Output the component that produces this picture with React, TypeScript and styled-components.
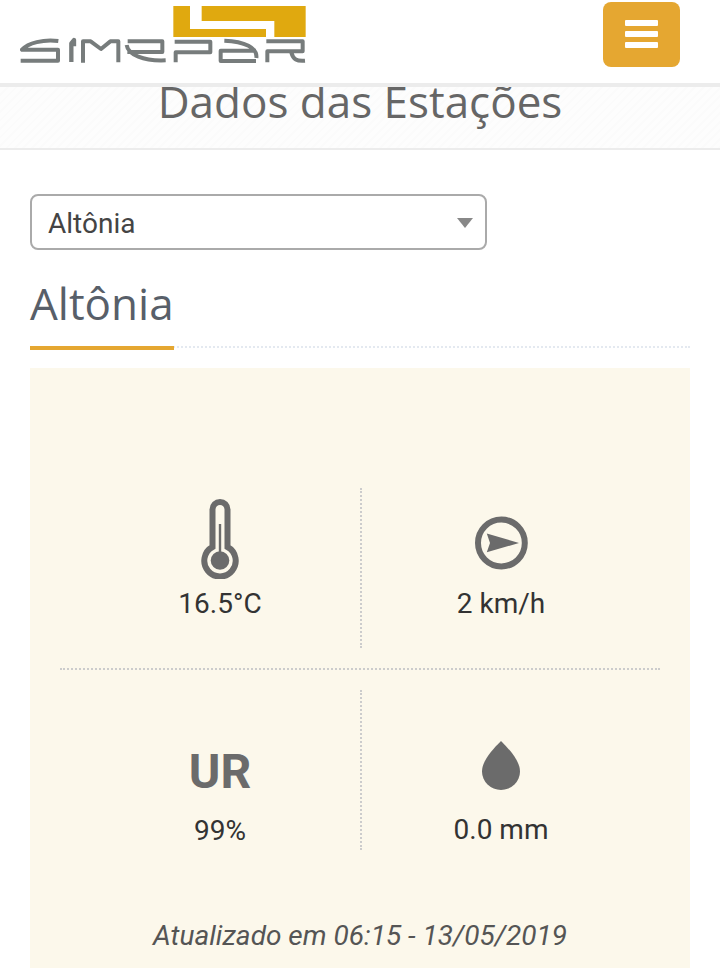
import React, { useState } from "react";
import styled, { createGlobalStyle } from "styled-components";

const GlobalStyle = createGlobalStyle`
  *, *::before, *::after { box-sizing: border-box; }
  body {
    margin: 0;
    background: #fff;
    color: #333;
    font-family: Roboto, "Liberation Sans", sans-serif;
    font-size: 28px;
    line-height: 38px;
  }
`;

const Header = styled.header`
  position: sticky;
  top: 0;
  z-index: 1;
  display: flex;
  justify-content: space-between;
  align-items: flex-start;
  padding: 2px 40px 16px 20px;
  background: #fff;
  border-bottom: 4px solid #ececec;
`;

const LogoLink = styled.a`
  display: block;
  padding-top: 4px;
  svg { display: block; }
`;

const MenuButton = styled.button`
  display: flex;
  flex-direction: column;
  align-items: center;
  justify-content: center;
  gap: 5px;
  width: 77px;
  height: 65px;
  padding: 0 0 1px;
  border: 0;
  border-radius: 8px;
  background: #e5a731;
  cursor: pointer;
`;

const MenuBar = styled.span`
  width: 33px;
  height: 6px;
  border-radius: 1px;
  background: #fff;
`;

const TitleBand = styled.div`
  margin-top: -16px;
  padding-bottom: 17px;
  border-bottom: 2px solid #ececec;
  background: repeating-linear-gradient(135deg, #fdfdfd 0 4px, #fbfbfb 4px 6px);
`;

const PageTitle = styled.h1`
  margin: 0;
  text-align: center;
  font: 400 44px/60px "Open Sans", "Noto Sans", sans-serif;
  color: #666;
`;

const Content = styled.main`
  padding: 44px 30px 6px;
`;

const SelectBox = styled.div`
  position: relative;
  width: 457px;
  max-width: 100%;
  svg {
    position: absolute;
    right: 14px;
    top: 24px;
    pointer-events: none;
  }
`;

const StationSelect = styled.select`
  appearance: none;
  display: block;
  width: 100%;
  height: 56px;
  padding: 4px 48px 0 16px;
  border: 2px solid #aaa;
  border-radius: 8px;
  background: #fff;
  color: #444;
  font: inherit;
`;

const StationHeading = styled.div`
  display: flex;
  margin: 23px 0 20px;
  border-bottom: 2px dotted #e4e9f0;
`;

const StationName = styled.h2`
  margin: 0 0 -4px;
  padding-bottom: 13px;
  border-bottom: 4px solid #e5a731;
  font: 400 44px/60px "Open Sans", "Noto Sans", sans-serif;
  color: #585f69;
`;

const Panel = styled.section`
  padding: 120px 30px 13px;
  background: #fcf8eb;
`;

const ReadingRow = styled.div<{ $divided?: boolean }>`
  display: grid;
  grid-template-columns: 141fr 139fr;
  padding: 0 20px ${(p) => (p.$divided ? "20px" : "0")};
  margin-bottom: ${(p) => (p.$divided ? "20px" : "0")};
  border-bottom: ${(p) => (p.$divided ? "2px dotted #ccc" : "0")};
`;

const Reading = styled.div<{ $bottom: number; $gap: number; $divided?: boolean }>`
  display: flex;
  flex-direction: column;
  align-items: center;
  justify-content: flex-end;
  gap: ${(p) => p.$gap}px;
  height: 160px;
  padding-bottom: ${(p) => p.$bottom}px;
  border-right: ${(p) => (p.$divided ? "2px dotted #ccc" : "0")};
`;

const Humidity = styled.strong`
  font-size: 48px;
  line-height: 56px;
  color: #6b6b6b;
`;

const Updated = styled.p`
  margin: 67px 0 0;
  text-align: center;
  font-style: italic;
  color: #555;
`;

const Logo = () => (
  <svg width="287" height="58" viewBox="60 18 861 174" role="img" aria-label="Simepar">
    <path fill="#e0a90f" d="M520 18H570V87H798V111H520ZM605 18H917V111H823V63H605Z" />
    <g fill="none" stroke="#777c7c" strokeWidth="12" strokeLinejoin="round">
      <path d="M175 123C130 117 84 129 66 149H174V182H62" />
      <path strokeWidth="13" d="M214 186V130L222 120V139" />
      <path d="M249 188V124H272L303 147L331 124H355V187" />
      <path d="M383 124H487V156H382M380 135C384 164 430 184 497 181" />
      <path d="M524 125H631V157H527V187" />
      <path d="M673 122C734 124 773 144 769 174M768 183H662V152H768" />
      <path d="M799 124H908V154H802V187M874 158C880 179 890 184 915 182" />
    </g>
  </svg>
);

const Thermometer = () => (
  <svg width="38" height="81" viewBox="0 0 38 81" aria-hidden="true">
    <path
      fill="none"
      stroke="#6b6b6b"
      strokeWidth="6"
      d="M11.5 49V11.5a7.5 7.5 0 0 1 15 0V49a15.7 15.7 0 1 1-15 0Z"
    />
    <path stroke="#6b6b6b" strokeWidth="2.4" d="M19 26V56" />
    <circle cx="19" cy="62.5" r="9.3" fill="#6b6b6b" />
  </svg>
);

const Wind = () => (
  <svg width="54" height="54" viewBox="0 0 54 54" aria-hidden="true">
    <circle cx="27.4" cy="27" r="23.4" fill="none" stroke="#6b6b6b" strokeWidth="6" />
    <path fill="#6b6b6b" d="M12.8 17.6L45 27L12.8 36.2L16 27Z" />
  </svg>
);

const Drop = () => (
  <svg width="38" height="49" viewBox="0 0 38 49" aria-hidden="true">
    <path fill="#6b6b6b" d="M19 0C28 9 38 20 38 30.500A19 18.500 0 0 1 0 30.500C0 20 10 9 19 0Z" />
  </svg>
);

export default function App() {
  const [station, setStation] = useState("Altônia");
  return (
    <>
      <GlobalStyle />
      <Header>
        <LogoLink href="#">
          <Logo />
        </LogoLink>
        <MenuButton type="button" aria-label="Menu">
          <MenuBar />
          <MenuBar />
          <MenuBar />
        </MenuButton>
      </Header>
      <TitleBand>
        <PageTitle>Dados das Estações</PageTitle>
      </TitleBand>
      <Content>
        <SelectBox>
          <StationSelect
            aria-label="Estação"
            value={station}
            onChange={(e) => setStation(e.target.value)}
          >
            <option>Altônia</option>
          </StationSelect>
          <svg width="16" height="10" viewBox="0 0 16 10" aria-hidden="true">
            <path fill="#888" d="M0 0H16L8 10Z" />
          </svg>
        </SelectBox>
        <StationHeading>
          <StationName>{station}</StationName>
        </StationHeading>
        <Panel>
          <ReadingRow $divided>
            <Reading $divided $bottom={25} $gap={6}>
              <Thermometer />
              <span>16.5°C</span>
            </Reading>
            <Reading $bottom={25} $gap={15}>
              <Wind />
              <span>2 km/h</span>
            </Reading>
          </ReadingRow>
          <ReadingRow>
            <Reading $divided $bottom={0} $gap={12}>
              <Humidity>UR</Humidity>
              <span>99%</span>
            </Reading>
            <Reading $bottom={1} $gap={21}>
              <Drop />
              <span>0.0 mm</span>
            </Reading>
          </ReadingRow>
          <Updated>Atualizado em 06:15 - 13/05/2019</Updated>
        </Panel>
      </Content>
    </>
  );
}
